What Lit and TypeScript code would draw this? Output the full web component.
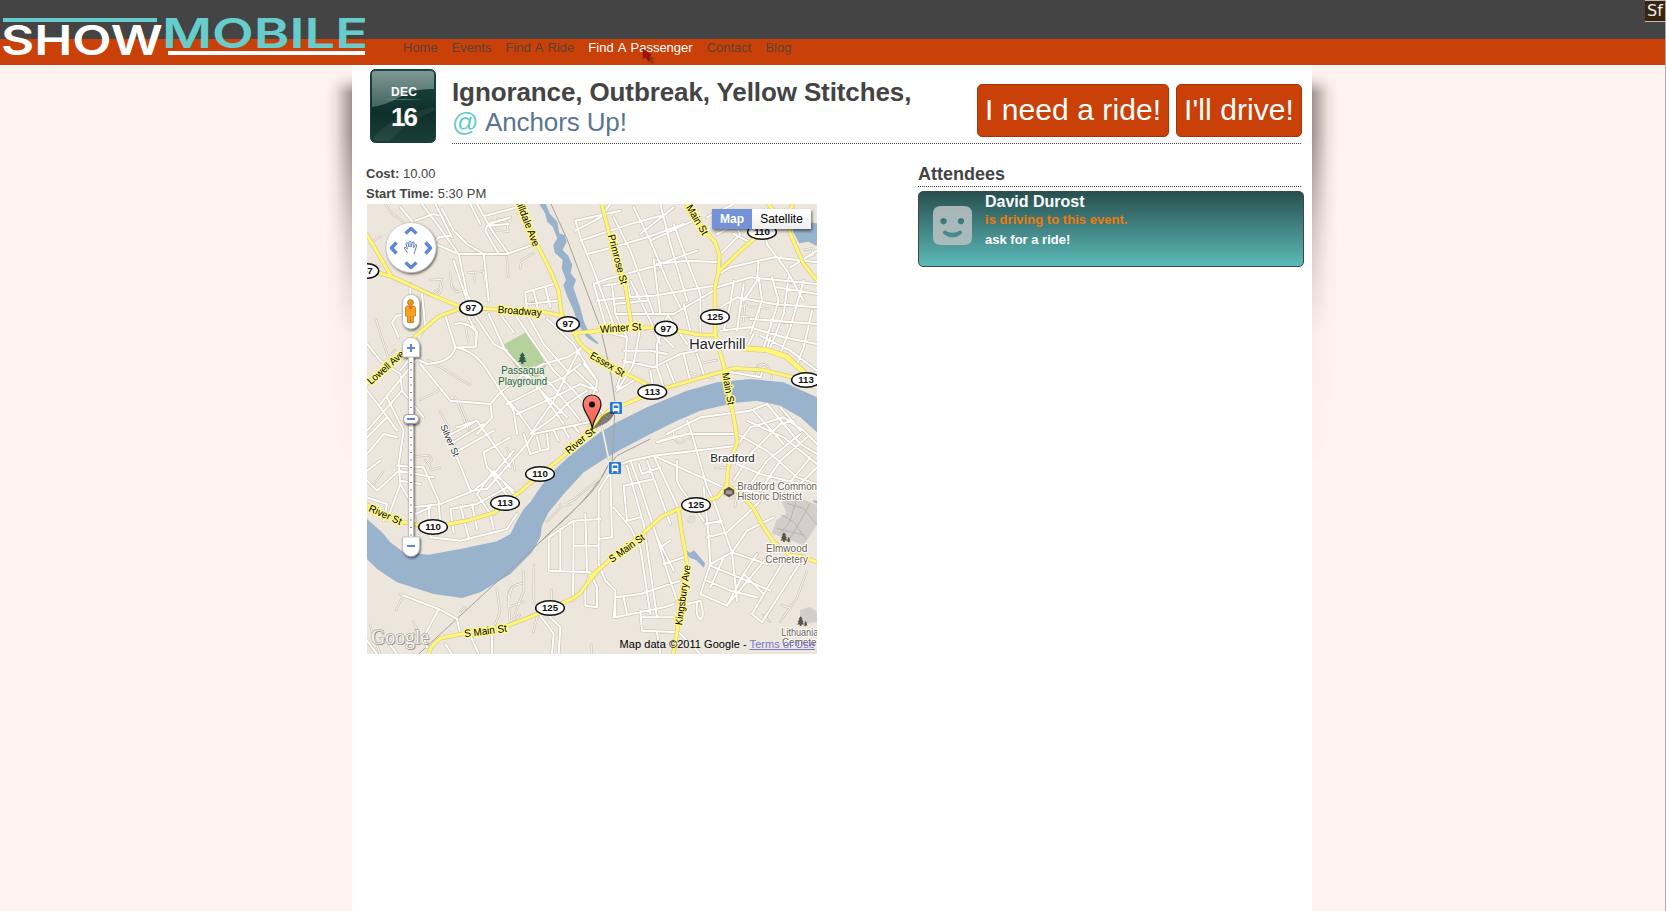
import { LitElement, html, css, svg } from "lit";
import { customElement } from "lit/decorators.js";

/* The map is surveyed in overlapping sheets, three units to the pixel. */
interface Sheet {
  x: number;
  y: number;
  lanes?: string;
  minor?: string;
  major?: string;
}

const NW = { x: 360, y: 200 };
const NE = { x: 590, y: 200 };
const SW = { x: 360, y: 425 };
const SE = { x: 590, y: 425 };
const ALL = { x: 367, y: 204 };

const sheets: Sheet[] = [
  {
    ...ALL,
    lanes: "M702 655L725 765",
    minor: `M100 10L130 45L145 65 M165 0L210 60L275 150 M145 50L200 30L215 35 M205 0L255 100 M190 130L215 100L250 95 M275 150L350 150L420 150L490 125
      M225 15L260 80L300 120L350 150 M275 150L300 270L310 290 M350 150L365 290 M330 0L375 80L425 150 M425 60L360 65L355 80L395 150 M355 35L450 10
      M365 60L430 40 M310 0L340 60 M205 120L275 150 M260 170L300 290
      M130 240V280 M165 270L175 370L155 400 M130 330L90 335L75 355L95 400 M235 335L265 430 M265 360Q300 350 330 385L325 430L265 430
      M265 430Q255 475 180 480L150 465 M265 430Q320 440 355 490L400 560L440 620L450 690 M300 330L320 370 M320 330L380 420L420 440
      M365 330L415 440L470 500L540 580L600 640 M400 330L440 385 M440 325L490 400L560 500 M480 330L530 420L600 500 M540 345L620 420L650 470L690 530
      M475 270L480 320 M475 265L560 240 M500 260L515 325 M535 250L550 310 M480 300L570 290
      M0 420L40 470L100 510L105 560L0 680 M0 560L40 610L90 680 M40 600L150 465 M105 560L170 640 M160 480L250 590L370 600 M130 460L100 500
      M400 565L470 510L530 480L600 460L650 430 M400 565L370 600L375 640L330 690 M400 565L450 620L500 690 M470 510L520 560L590 660 M500 490L560 550L640 650
      M560 500L620 560L680 630 M620 495L690 560 M420 600L520 550L590 520L640 480 M450 630L560 580L640 540L690 560 M490 690L560 640L600 600L660 560
      M500 690L665 655 M640 430L600 510L560 590L490 690 M650 480L690 530Q690 560 660 600 M690 610L720 640 M510 700L520 740L545 735L540 690
      M470 690L490 750L520 740 M560 680L575 710 M590 672L605 700 M620 665L635 685
      M235 700L330 650 M250 720L350 660 M265 745L380 680 M270 760L310 860L360 855L480 720L500 690 M330 650L430 790 M270 670L330 650
      M60 580L110 680L95 780 M0 700L60 640 M0 750L50 690L90 700 M0 830L30 860L95 800L200 820 M95 780L100 840L140 910L220 900L320 860L380 810L440 740
      M0 880L60 900L50 950 M0 800L40 770 M100 840L60 950 M90 785L170 790L215 890L220 970 M100 830L160 840 M140 910L145 960
      M185 905L190 1000L280 1010L420 975L450 930 M250 915L330 900L420 850 M250 915L260 985 M280 905L305 1000 M315 900L330 975 M330 870L370 930L380 975
      M330 870L380 800L440 870 M350 745L360 790L440 860 M350 745L430 700 M370 800L430 890 M145 930L190 910
      M110 1175L215 1215L270 1245L280 1290 M215 1215L170 1300L180 1330 M0 1310L30 1350 M60 1310L90 1350 M235 1320L255 1350 M310 1295L335 1350
      M375 1280L375 1350 M520 1235L560 1290L555 1350 M545 1235L580 1270L575 1350
      M545 1000L620 950L700 945 M545 1000V1100L670 1105L690 1150V1210L655 1205V1150L670 1105 M580 975V1100 M620 950L618 1190 M620 1025L695 1025
      M655 930L660 1100 M695 860L695 1080 M730 800L735 1000L695 1005 M695 860L740 790 M695 1080L715 1130L745 1160L745 1240
      M625 80L700 40L730 0 M625 50L760 20 M625 50L640 100L680 200L750 390 M640 110L790 60L900 30 M660 150L700 140L840 100L950 60
      M680 240L720 225L850 190L990 140 M740 40L790 140L860 330 M800 10L850 110L900 230L940 310 M880 0L910 120L960 290
      M920 60L960 170L1000 270L1000 380 M820 90L920 10 M850 110L1000 40 M860 165L880 330 M870 180L960 170L1060 175
      M680 240L720 380 M710 245L780 235L790 280 M735 240L745 330L780 400 M690 290L780 280L860 275L1040 245 M745 330L920 330L1040 260
      M740 300L840 290 M790 230L850 350L880 420 M900 340L870 420L870 480 M900 330L960 420 M950 300L970 380 M820 370L800 480L750 560
      M800 370L870 380L920 430 M770 440L850 440L900 450 M770 470L860 490L940 450L990 440 M780 400L775 470L750 550 M870 490L890 550 M850 500L860 560
      M900 480L925 545 M950 450L970 530 M990 450L1010 510 M750 560L800 530 M720 385L780 400
      M1055 210L1090 190L1220 160L1350 175 M1060 150L1120 90L1100 60L1050 50 M1100 90L1150 115 M1020 40L1100 0 M1050 90L1110 60L1160 60
      M1190 60L1200 120L1260 200L1310 290 M1270 190L1350 140 M1175 170L1170 230L1130 290 M1050 250L1150 220L1350 240 M1060 310L1110 280L1220 300L1350 310
      M1100 230L1090 300L1070 380 M1130 240L1110 380 M1175 220L1185 290L1150 390 M1215 220L1235 290L1190 430 M1265 220L1250 330L1210 430
      M1310 230L1270 370L1240 450 M1060 380L1150 370L1250 400L1350 420 M1150 345L1350 360 M1180 395L1270 440L1350 500 M1160 390L1140 430
      M1210 400L1200 435 M1335 320L1310 430L1290 480 M1230 250L1350 270 M1070 500L1180 520L1190 490
      M735 790L790 770L860 755L1110 725 M860 755L1080 855 M900 690L1000 640L1150 620L1200 600 M870 715L960 690L1110 690
      M960 650L975 690L1020 850L1040 890 M790 770L820 850L870 1000L920 1100 M770 845L860 825 M770 845L780 950L820 940
      M815 780L825 810L880 790 M780 785L830 960L860 1170L870 1240 M840 770L870 850L910 960 M860 755L900 840L935 915
      M740 910L790 970L820 1030L850 1230 M870 1000L900 1100L930 1190 M880 1030L910 1010 M890 1080L950 1060 M745 1180L820 1170L940 1130
      M745 1240L890 1210L920 1200 M745 1180L740 1240 M770 1180L780 1230 M820 1240L940 1240 M820 1220L825 1280L935 1285L1000 1350 M870 1285L880 1350
      M930 770L930 830L940 850L1010 950 M1010 850L1025 1000L1030 1080L1000 1170 M1040 890L1065 960L1095 1045L1110 1190 M1015 960L1065 950
      M1020 1000L1080 985L1150 920L1180 890 M1030 1080L1095 1045L1140 980L1220 940 M1095 1045L1200 1080 M1030 1085L1140 1130L1210 1160
      M1020 1130L1090 1160L1170 1180 M1000 1170L1080 1205L1200 1060L1220 1020 M1080 1205L1130 1110L1170 1050 M1030 1150L1070 1060
      M960 1200L1000 1190Q1015 1240 1000 1245Q985 1240 990 1195 M1155 1230L1250 1070 M1155 1230L1185 1255L1310 1060 M1130 1110L1190 1170
      M1110 725L1150 670L1250 640 M1110 690L1200 740L1290 820L1350 840 M1140 650L1250 700L1350 780 M1160 620L1250 720 M1200 600L1300 720L1350 750
      M1240 610L1300 680 M1100 830L1150 750L1240 660L1280 650 M1100 850L1180 870 M1130 870L1200 770L1300 690 M1180 860L1240 770L1320 700
      M1240 870L1330 760 M1110 780L1180 810L1300 840 M1250 640L1310 680L1350 720 M1290 850L1350 790`,
  },
  {
    ...NW,
    lanes: `M75 12L95 40L130 65L137 90 M210 240L245 238L240 265L220 280 M245 260L235 290 M270 218L275 260L290 275L318 268
      M325 218L370 215L375 245 M340 215L345 245 M48 360L85 475L105 450
      M315 370L325 425 M345 375L350 440 M395 60L405 90L445 95L440 65L412 55 M480 205L485 180L520 160
      M440 170L445 230 M205 480L330 555 M285 590L325 690 M240 635L270 690
      M300 610L330 685 M180 600L240 570 M60 200L20 190 M30 130L60 110`,
    major: `M21 105L95 230 M21 208L95 230L215 285L300 320L333 324L410 328L545 335L610 348
      M300 326L235 350L165 410L128 455L21 552 M480 12L530 130L575 220L595 270L605 345 M640 400L720 392 M645 400Q650 430 700 465L735 482`,
  },
  {
    ...NE,
    lanes: `M140 270L145 300L125 310 M195 180L215 185L205 210 M450 320L470 315 M465 310L460 365 M450 350L475 350 M480 320L535 325
      M510 320L505 355 M645 150L665 145L672 165L655 170 M500 530Q490 495 515 492Q540 490 545 535 M300 520L370 535 M330 490L380 480`,
    major: `M35 12L60 110L105 250L125 380 M0 398L30 390L154 382L228 386L330 405L370 405L378 395 M290 12L345 95L375 125L388 165L385 220L375 260L375 400L385 440L405 510L425 620L438 690
      M388 212L470 135L516 96 M535 12L562 45 M608 12L592 50L600 100L640 190L681 242 M0 453L100 517L187 562
      M187 574L240 560L395 515L430 505L520 510L600 530L681 552 M187 578L100 615L60 630L0 682`,
  },
  {
    ...SW,
    lanes: `M165 95L205 90Q225 105 205 115L195 105 M205 115L215 135L240 128 M440 70L460 110L465 135 M108 555L130 510L120 508 M160 590L170 610
      M455 490Q440 540 450 545L490 530 M490 440L490 500L460 580 M485 475Q440 480 445 530L450 590L480 570 M522 420L520 520L535 560L520 620
      M575 495L575 530 M410 490L420 560L405 600 M560 290L610 240L640 225L720 160 M600 240L630 240 M300 560L315 548
      M30 600L60 687 M695 660L695 687 M40 180L70 140`,
    major: `M705 10L620 85L540 150L480 200L435 235L405 262L330 285L219 306L130 292L30 245L21 238
      M720 430L690 465L660 505L635 522L570 550L500 580L440 603L380 618L300 628L240 640L215 665L205 687`,
  },
  {
    ...SE,
    lanes: `M375 130L420 125 M210 45L260 30L300 40 M420 220L440 215L435 245 M300 275Q290 290 305 292Q318 288 308 275 M575 540L600 550
      M570 590L620 520L650 440 M540 590L520 570 M250 20Q250 60 280 50L300 20`,
    major: `M435 0L442 50L415 125L410 180L385 215L318 240L265 252L215 275L160 325L60 405L0 455
      M410 180L450 205L490 250L520 305L550 350L600 390L640 395L681 412 M265 252L275 320L292 420L264 600L250 687`,
  },
];

const scaled = (s: { x: number; y: number }) => `translate(${s.x} ${s.y}) scale(.33333)`;

type Place = { x: number; y: number };
type Label = [Place, string, number, number, number, number, number, string];

/* sheet, text, start x/y, end x/y of the text's centre line, size, style */
const labels: Label[] = [
  [NW, "Hilldale Ave", 474, -8, 530, 138, 31, "street"],
  [NW, "Broadway", 413, 328, 545, 337, 32, "street"],
  [NW, "Lowell Ave", 26, 547, 128, 457, 31, "street"],
  [NW, "Passaqua", 424, 512, 553, 512, 31, "park"],
  [NW, "Playground", 415, 543, 561, 543, 31, "park"],
  [NE, "Essex St", 3, 463, 102, 521, 31, "street"],
  [NE, "Primrose St", 64, 104, 103, 252, 31, "street"],
  [NE, "Main St", 297, 16, 347, 102, 31, "street"],
  [NE, "Winter St", 30, 388, 154, 379, 32, "street"],
  [NE, "Main St", 407, 518, 424, 614, 31, "street"],
  [NE, "Haverhill", 298, 432, 466, 432, 44, "town"],
  [SW, "River St", 28, 248, 124, 290, 31, "street"],
  [SW, "River St", 620, 80, 700, 14, 31, "street"],
  [SW, "Silver St", 250, 0, 290, 92, 28, "lane"],
  [SW, "S Main St", 313, 626, 440, 609, 32, "street"],
  [SE, "S Main St", 60, 405, 160, 333, 31, "street"],
  [SE, "Kingsbury Ave", 265, 600, 291, 420, 31, "street"],
  [SE, "Bradford", 361, 99, 494, 99, 35, "town"],
  [SE, "Bradford Common", 442, 184, 681, 184, 31, "site"],
  [SE, "Historic District", 442, 215, 636, 215, 31, "site"],
  [SE, "Elmwood", 528, 370, 652, 370, 31, "site"],
  [SE, "Cemetery", 526, 402, 654, 402, 31, "site"],
  [SE, "Lithuanian", 574, 621, 700, 621, 31, "site"],
  [SE, "Cemetery", 576, 653, 704, 653, 31, "site"],
];

const shields: [Place, string, number, number][] = [
  [NW, "97", 333, 324],
  [NW, "97", 624, 372],
  [NW, "97", 22, 213],
  [NE, "110", 516, 96],
  [NE, "97", 228, 386],
  [NE, "125", 375, 351],
  [NE, "113", 187, 576],
  [NE, "113", 648, 540],
  [SW, "110", 540, 147],
  [SW, "113", 435, 234],
  [SW, "110", 219, 306],
  [SW, "125", 570, 549],
  [SE, "125", 318, 240],
];

const roads = (kind: "lanes" | "minor" | "major", cls: string) =>
  sheets.filter((s) => s[kind]).map((s) => svg`<path class=${cls} transform=${scaled(s)} d=${s[kind]} />`);

const label = ([s, text, x1, y1, x2, y2, size, kind]: Label) => {
  const length = Math.hypot(x2 - x1, y2 - y1);
  const angle = (Math.atan2(y2 - y1, x2 - x1) * 180) / Math.PI;
  return svg`<g transform=${scaled(s)}><text class="label ${kind}"
    transform="translate(${x1} ${y1}) rotate(${angle})" y=${size * 0.35}
    font-size=${size} textLength=${length} lengthAdjust="spacingAndGlyphs">${text}</text></g>`;
};

const shield = ([s, text, x, y]: [Place, string, number, number]) => svg`
  <g transform="${scaled(s)} translate(${x} ${y})">
    <ellipse rx=${text.length > 2 ? 43 : 34} ry="22" fill="#fff" stroke="#111" stroke-width="4.5" />
    <text class="shield" y="10">${text}</text>
  </g>`;

const tree = "M0-17L8-6H4L11 4H6L13 12H3V18H-3V12H-13L-6 4H-11L-4-6H-8Z";

const station = (x: number, y: number) => svg`
  <g transform="translate(${x} ${y})">
    <rect x="-6.500" y="-6.500" width="13" height="13" rx="1.500" fill="#2f7ac6" stroke="#fff" stroke-width=".7" />
    <path d="M-3.300 3V-3.200Q-3.300-4.500 0-4.500T3.300-3.200V3Z" fill="#fff" />
    <path d="M-2.300-2.500H2.300V0H-2.300Z" fill="#2f7ac6" />
    <path d="M-2 3L-3.200 4.800M2 3L3.200 4.800" stroke="#fff" stroke-width="1.100" />
  </g>`;

@customElement("event-map")
export class EventMap extends LitElement {
  static styles = css`
    :host { display: block; position: relative; width: 450px; height: 450px; overflow: hidden; }
    svg { display: block; }
    text { font-family: "Liberation Sans", Arial, sans-serif; }
    path { stroke-linejoin: round; }
    .lane-case, .minor-case, .major-case, .lane-fill, .minor-fill, .major-fill { fill: none; stroke-linecap: round; }
    .lane-case { stroke: #cfc7b6; stroke-width: 7; }
    .lane-fill { stroke: #faf8f4; stroke-width: 3; }
    .minor-case { stroke: #cdc4b2; stroke-width: 10; }
    .minor-fill { stroke: #fff; stroke-width: 6; }
    .major-case { stroke: #d6c98b; stroke-width: 13; }
    .major-fill { stroke: #fff678; stroke-width: 9; }
    .wide.major-case { stroke-width: 18; }
    .wide.major-fill { stroke-width: 14; }
    .label { paint-order: stroke; stroke-width: 9px; stroke-linejoin: round; }
    .street { fill: #000; stroke: #fff88a; }
    .town { fill: #222; stroke: #fff; }
    .lane { fill: #222; stroke: #fff; stroke-width: 6px; }
    .park { fill: #2f5d4a; stroke: #e8f1de; stroke-width: 6px; }
    .site { fill: #6b5d50; stroke: #fff; stroke-width: 6px; }
    .shield { font-size: 29px; font-weight: bold; text-anchor: middle; fill: #111; }
    .shade { font-family: "Liberation Serif", serif; font-size: 21px; fill: #8d8880; }
    .google { font-family: "Liberation Serif", serif; font-size: 21px; fill: #f6f4f0; stroke: #aca79f; stroke-width: 1.3px; paint-order: stroke; }
    .types { position: absolute; top: 5px; right: 6px; display: flex; height: 20px; box-shadow: 1px 2px 3px rgba(0, 0, 0, .55);
      font: 12px/20px "Liberation Sans", Arial, sans-serif; }
    .type { width: 59px; text-align: center; background: linear-gradient(#fff, #eee); color: #000; }
    .type.on { width: 40px; font-weight: bold; color: #fff; background: #7492d8; }
    .credit { position: absolute; right: 2px; bottom: 3px; font: 11px/13px "Liberation Sans", Arial, sans-serif; letter-spacing: .05px; color: #000; white-space: nowrap; }
    .terms { color: #7777cc; text-decoration: underline; }
  `;

  render() {
    return html`
      <svg width="450" height="450" viewBox="367 204 450 450">
        <defs>
          <filter id="drop" x="-30%" y="-30%" width="170%" height="170%">
            <feDropShadow dx="1" dy="1.5" stdDeviation="1" flood-opacity=".6" />
          </filter>
          <linearGradient id="pin" x2="0" y2="1"><stop offset="0" stop-color="#ff857b" /><stop offset="1" stop-color="#f65a50" /></linearGradient>
        </defs>
        <rect x="367" y="204" width="450" height="450" fill="#ece6dc" />
        <path transform=${scaled(ALL)} fill="#99b3cc" d="M0 945L45 985L70 1015L110 1045L185 1052L280 1035L390 1012L430 990L450 950L470 915L490 895L520 850L560 800L620 745L700 685L750 655
          L840 610L960 560L1050 535L1150 525L1250 535L1350 580V685L1300 640L1240 605L1170 590L1100 597L1000 620L930 650L850 690L770 732L720 760
          L650 805L590 870L545 925L525 965L520 1000L495 1045L430 1110L340 1165L285 1182L200 1170L90 1135L30 1095L0 1065Z" />
        <g transform=${scaled(NW)}>
          <path fill="#99b3cc" d="M538 12H558L570 42L592 65L598 100L614 106L620 125L608 150L625 168L637 195L632 220L648 240L640 262L660 320L672 365L690 405L716 430L712 433L680 412L655 375L640 330L620 285L610 255L618 240L605 205L608 180L584 158L580 135L592 115L578 80L562 65L555 40Z" />
          <path fill="#b5d29c" d="M427 435L500 396L560 495L535 530L500 532L470 505Z" />
        </g>
        <g transform=${scaled(NE)}>
          <path fill="#99b3cc" d="M600 60L681 70V138L655 125L628 130L612 100Z" />
        </g>
        <g transform=${scaled(SE)}>
          <path fill="#99b3cc" d="M285 372L300 384L312 376L345 415L342 428L318 405L300 398L288 388Z M668 225L681 228V236L672 232Z" />
          <path fill="#d3cecb" d="M575 230L620 215L681 240V300L640 360L600 345L545 325L560 285L590 265Z M630 555L660 545L681 560V590L630 600Z" />
          <path fill="none" stroke="#bab2aa" stroke-width="3" d="M590 235L640 250L681 300M575 270L610 290L650 345M620 220L600 290L570 325M660 235L630 290L600 340M560 310L640 330" />
        </g>
        <g fill="none" stroke="#a5a29d" stroke-width="3">
          <path transform=${scaled(ALL)} d="M552 0L600 105L700 370L730 500L745 600L735 780 M155 1350L470 1060L610 930Q690 850 720 790L750 755L850 705 M455 1075L560 975L650 890Q700 840 725 780" />
        </g>
        ${roads("lanes", "lane-case")} ${roads("minor", "minor-case")} ${roads("lanes", "lane-fill")} ${roads("minor", "minor-fill")}
        ${roads("major", "major-case")}
        <path transform=${scaled(NE)} class="major-case wide" d="M460 445L530 450L590 470L640 515L660 540" />
        ${roads("major", "major-fill")}
        <path transform=${scaled(NE)} class="major-fill wide" d="M460 445L530 450L590 470L640 515L660 540" />

        <g transform=${scaled(NW)}><path transform="translate(487 474)" fill="#2f5d4a" d=${tree} /></g>
        <g transform=${scaled(SE)} fill="#5f5046">
          <path transform="translate(582 336) scale(.85)" d=${tree} /><path transform="translate(596 344) scale(.45)" d=${tree} />
          <path transform="translate(632 588) scale(.85)" d=${tree} /><path transform="translate(647 596) scale(.45)" d=${tree} />
          <path d="M417 184L434 194V208L417 218L400 208V194Z" stroke="#fff" stroke-width="2" /><path d="M407 196H427V208H407Z" fill="#a3988e" />
        </g>
        ${station(616, 408)} ${station(615, 468)}
        ${labels.map(label)} ${shields.map(shield)}

        <path d="M592 430L601 417Q609 410 615 412Q612 421 602 425Z" fill="#000" opacity=".45" />
        <path d="M592.300 429C591 417 583 412 583 404A9 9 0 0 1 601 404C601 412 593.500 417 592.300 429Z" fill="url(#pin)" stroke="#111" stroke-width="1.200" />
        <circle cx="592" cy="404.500" r="3" fill="#111" />

        <circle cx="411" cy="247.500" r="25" fill="#fff" stroke="#bbb" stroke-width=".6" filter="url(#drop)" />
        <g fill="none" stroke="#5f86d2" stroke-width="3.400">
          <path d="M405.500 233.500L411 228.500L416.500 233.500M405.500 262.500L411 267.500L416.500 262.500M396.500 242.500L391.500 248L396.500 253.500M425.500 242.500L430.500 248L425.500 253.500" />
          <path stroke-width="1" d="M407.500 253L404.500 248.500Q404 246.500 406 247.500L407.500 249L406 243.500Q406.500 241.500 408 243.500L409 247L408.800 242Q409.800 240 411 242V247L412.500 242Q414 241 414 243L413.500 248L415.500 244.500Q417 244 416.500 246L415 251L414 254" />
        </g>
        <g filter="url(#drop)"><rect x="402.500" y="294.500" width="17" height="34.500" rx="8.500" fill="#fff" stroke="#aaa" stroke-width=".7" /></g>
        <path d="M406.500 306H414.500L415.500 308V316H413.500V322.500H407.500V316H405.500V308Z" fill="#f6a21b" stroke="#c17610" stroke-width=".8" />
        <circle cx="410.500" cy="302.500" r="3" fill="#e6951c" stroke="#a9650c" stroke-width=".6" />
        <path d="M408 306H413L410.500 310Z" fill="#e8691d" /><path d="M410.500 316V322" stroke="#c17610" />
        <g filter="url(#drop)" stroke="#aaa" stroke-width=".6" fill="#fff">
          <rect x="408.500" y="357" width="5" height="182" />
          <path d="M402.500 357V346A8.500 8.500 0 0 1 419.500 346V357Z" />
          <path d="M402.500 537V548A8.500 8.500 0 0 0 419.500 548V537Z" />
        </g>
        <path d="M411 362V536" stroke="#888" stroke-width="2" stroke-dasharray="1 6.500" />
        <rect x="403.500" y="414.500" width="15" height="9" rx="4" fill="#fff" stroke="#999" filter="url(#drop)" />
        <path d="M407 348H415M411 344V352M407 546H415M407 419H415" stroke="#5f86d2" stroke-width="2" />
        <text class="shade" x="372" y="645" textLength="58" lengthAdjust="spacingAndGlyphs" aria-hidden="true">Google</text>
        <text class="google" x="371" y="644" textLength="58" lengthAdjust="spacingAndGlyphs">Google</text>
      </svg>
      <div class="types"><div class="type on">Map</div><div class="type">Satellite</div></div>
      <div class="credit">Map data ©2011 Google - <span class="terms">Terms of Use</span></div>
    `;
  }
}

@customElement("app-root")
export class AppRoot extends LitElement {
  static styles = css`
    :host { display: block; height: 911px; overflow: hidden; background: #fef3ee; color: #444; position: relative;
      font: 13px/20px "Liberation Sans", Arial, sans-serif; border-right: 1px solid #aaa; box-sizing: border-box; }
    header { height: 65px; background: linear-gradient(#444 39px, #c94108 39px); display: flex; }
    .logo { display: block; flex: none; width: 403px; height: 65px; }
    .logo text { font-family: Inter, "Liberation Sans", sans-serif; font-weight: 600; }
    nav { display: flex; gap: 14px; padding-top: 38px; white-space: nowrap; word-spacing: 1.2px; }
    nav a { color: #5a4238; }
    nav a.on { color: #fff; }
    .cursor { position: absolute; left: 642px; top: 49px; }
    .badge { position: absolute; right: 0; top: 0; width: 20px; height: 20px; background: #38240f; border: 1px solid #bbb; border-width: 1px 0;
      color: #eee; font: 16px/19px "DejaVu Sans", sans-serif; text-align: center; }
    main { position: relative; box-sizing: border-box; width: 960px; height: 846px; margin-left: 352px; background: #fff; }
    main::before, main::after { content: ""; position: absolute; top: 8px; width: 25px; height: 400px;
      background: linear-gradient(to right, rgba(60, 50, 45, .5), rgba(60, 50, 45, .31) 30%, rgba(60, 50, 45, .09) 65%, rgba(60, 50, 45, .01));
      -webkit-mask-image: linear-gradient(transparent, rgba(0, 0, 0, .25) 2%, #000 5%, #000 15%, rgba(0, 0, 0, .45) 40%, rgba(0, 0, 0, .06) 65%, transparent); }
    main::after { left: 960px; }
    main::before { right: 960px; transform: scaleX(-1); }
    .top { display: flex; padding: 4px 10px 0 18px; height: 75px; }
    .date { flex: none; width: 66px; height: 74px; display: block; }
    .title { flex: 1; margin-left: 16px; display: flex; justify-content: space-between; height: 75px;
      background: repeating-linear-gradient(to right, #444 0 1px, transparent 1px 2px) bottom / 100% 1px no-repeat; }
    h1 { margin: 0; padding-top: 8px; font-size: 26px; line-height: 30px; white-space: nowrap; letter-spacing: -.11px; }
    .venue { font-weight: normal; color: #5b7590; }
    .at { color: #5fcbc9; margin-right: 1px; }
    .actions { display: flex; gap: 7px; padding-top: 15px; }
    .button { box-sizing: border-box; height: 53px; width: 192px; border: 1px solid #a83404; border-radius: 5px; background: #c94108;
      color: #fff; font-size: 30px; line-height: 49px; text-align: center; white-space: nowrap; letter-spacing: .08px; }
    .button.short { width: 126px; }
    .columns { display: flex; justify-content: space-between; padding: 20px 8px 0 14px; }
    .facts { word-spacing: .2px; }
    .map { display: block; margin-left: 1px; }
    .people { width: 386px; }
    h2 { margin: 0 2px 4px 0; height: 23px; font-size: 18px; line-height: 20px;
      background: repeating-linear-gradient(to right, #444 0 1px, transparent 1px 2px) bottom / 100% 1px no-repeat; }
    .card { box-sizing: border-box; height: 76px; border: 1px solid #444; border-radius: 5px; padding-left: 14px; display: flex; gap: 13px;
      background: linear-gradient(#28504f, #5cbab8); color: #fff; font-weight: bold; }
    .face { display: block; margin-top: 14px; }
    .name { font-size: 16px; line-height: 20px; }
    .status { color: #ee7b0c; line-height: 16px; letter-spacing: .04px; }
    .ask { line-height: 24px; }
  `;

  render() {
    return html`
      <header>
        <svg class="logo" viewBox="0 0 403 65">
          <path d="M3 20H157" stroke="#66cccc" stroke-width="4" />
          <path d="M168 53H365" stroke="#fff" stroke-width="4" />
          <text x="1" y="55" font-size="41" fill="#fff" textLength="162" lengthAdjust="spacingAndGlyphs">SHOW</text>
          <text x="162" y="48" font-size="41" fill="#66cccc" textLength="206" lengthAdjust="spacingAndGlyphs">MOBILE</text>
        </svg>
        <nav>
          <a>Home</a><a>Events</a><a>Find A Ride</a><a class="on">Find A Passenger</a><a>Contact</a><a>Blog</a>
        </nav>
        <svg class="cursor" width="16" height="16" viewBox="0 0 16 16">
          <path d="M4 4L13 10L10.500 11L12.500 14L10 15L8 12L6 14Z" fill="#501d04" opacity=".35" />
          <path d="M1 0L9 6L6 6.500L8 10.500L6 11.500L4 7.500L1.500 9.500Z" fill="#b30c08" stroke="#5c1208" stroke-width=".7" />
        </svg>
        <div class="badge">Sf</div>
      </header>
      <main>
        <section class="top">
          <svg class="date" viewBox="0 0 66 74">
            <defs>
              <linearGradient id="base" x2="0" y2="1"><stop offset="0" stop-color="#1b4a45" /><stop offset=".6" stop-color="#0f2f2b" /><stop offset="1" stop-color="#1a3f3a" /></linearGradient>
              <linearGradient id="gloss" x2="0" y2="1"><stop offset="0" stop-color="#7f9894" /><stop offset="1" stop-color="#426661" /></linearGradient>
              <linearGradient id="rule"><stop offset="0" stop-color="#fff" stop-opacity="0" /><stop offset=".5" stop-color="#fff" stop-opacity=".3" /><stop offset="1" stop-color="#fff" stop-opacity="0" /></linearGradient>
            </defs>
            <rect x=".5" y=".5" width="65" height="73" rx="5" fill="url(#base)" stroke="#164039" />
            <path d="M2 5Q2 2 5 2H61Q64 2 64 5V20Q44 19 30 28Q16 36 2 38Z" fill="url(#gloss)" />
            <path d="M3 70Q17 48 64 38V42Q34 54 20 72H5Z" fill="#fff" opacity=".06" />
            <rect x="12" y="30" width="42" height="1" fill="url(#rule)" />
            <g fill="#fff" font-family="Liberation Sans, Arial, sans-serif" font-weight="bold" text-anchor="middle">
              <text x="34" y="27" font-size="12" textLength="26">DEC</text>
              <text x="34.500" y="56.500" font-size="26" textLength="27">16</text>
            </g>
          </svg>
          <div class="title">
            <h1>Ignorance, Outbreak, Yellow Stitches,<br /><span class="venue"><span class="at">@</span> Anchors Up!</span></h1>
            <div class="actions"><div class="button">I need a ride!</div><div class="button short">I'll drive!</div></div>
          </div>
        </section>
        <section class="columns">
          <div>
            <div class="facts"><b>Cost:</b> 10.00</div>
            <div class="facts"><b>Start Time:</b> 5:30 PM</div>
            <event-map class="map"></event-map>
          </div>
          <div class="people">
            <h2>Attendees</h2>
            <div class="card">
              <svg class="face" width="39" height="39" viewBox="0 0 39 39">
                <path fill-rule="evenodd" fill="#b5bfc1" opacity=".9" d="M8 0H31Q39 0 39 8V31Q39 39 31 39H8Q0 39 0 31V8Q0 0 8 0Z
                  M10.500 12A3.200 3.200 0 1 0 10.510 12ZM28 12A3.200 3.200 0 1 0 28.010 12ZM12 24.500Q9 25 10.500 28Q19.500 35 28.500 28Q30 25 27 24.500Q19.500 29 12 24.500Z" />
              </svg>
              <div>
                <div class="name">David Durost</div>
                <div class="status">is driving to this event.</div>
                <div class="ask">ask for a ride!</div>
              </div>
            </div>
          </div>
        </section>
      </main>
    `;
  }
}
